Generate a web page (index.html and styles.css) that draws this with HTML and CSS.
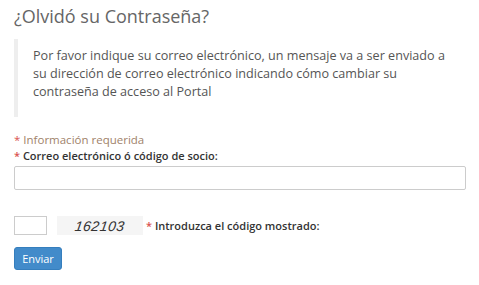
FILE: index.html
```html
<!DOCTYPE html>
<html lang="es">
<head>
<meta charset="utf-8">
<title>¿Olvidó su Contraseña?</title>
<link rel="stylesheet" href="styles.css">
</head>
<body>
<div class="page">
  <h1 class="title">¿Olvidó su Contraseña?</h1>
  <blockquote class="note">
    <p>Por favor indique su correo electrónico, un mensaje va a ser enviado a su dirección de correo electrónico indicando cómo cambiar su contraseña de acceso al Portal</p>
  </blockquote>
  <form class="form">
    <p class="req"><span class="star">*</span> Información requerida</p>
    <label class="lbl" for="email"><span class="star">*</span> Correo electrónico ó código de socio:</label>
    <input class="field" id="email" type="text">
    <div class="captcha-row">
      <input class="code" type="text">
      <div class="captcha"><span class="digits">162103</span></div>
      <label class="lbl inline"><span class="star">*</span> Introduzca el código mostrado:</label>
    </div>
    <button class="btn" type="button">Enviar</button>
  </form>
</div>
</body>
</html>
```
FILE: styles.css
```css
html, body {
  margin: 0;
  padding: 0;
  background: #fff;
}
.page {
  padding: 0 13px 0 14px;
  font-family: "Open Sans", "DejaVu Sans", sans-serif;
  color: #555;
}
.title {
  margin: 0;
  padding-top: 3px;
  font-size: 18px;
  font-weight: 400;
  line-height: 26px;
  color: #666;
}
.note {
  margin: 10px 0 0 0;
  padding: 8px 14px 16px 15px;
  border-left: 4px solid #eee;
}
.note p {
  margin: 0;
  font-size: 12.6px;
  line-height: 18px;
  color: #555;
}
.form {
  margin-top: 15px;
}
.req {
  margin: 0;
  font-size: 11.5px;
  line-height: 16px;
  color: #a0826a;
}
.star {
  color: #d9534f;
}
.lbl {
  display: block;
  font-size: 11px;
  line-height: 16px;
  font-weight: 600;
  color: #333;
}
.field {
  display: block;
  box-sizing: border-box;
  width: 100%;
  height: 24px;
  margin: 2px 0 0 0;
  border: 1px solid #ccc;
  border-radius: 2px;
  background: #fff;
}
.captcha-row {
  display: flex;
  align-items: center;
  margin-top: 26px;
}
.code {
  box-sizing: border-box;
  width: 33px;
  height: 19px;
  margin: 0;
  border: 1px solid #ccc;
  background: #fff;
}
.captcha {
  width: 86px;
  height: 19px;
  margin-left: 10px;
  background: #f5f5f5;
  display: flex;
  align-items: center;
  justify-content: center;
}
.digits {
  font-family: "Liberation Sans", Arial, sans-serif;
  font-style: italic;
  font-size: 14px;
  color: #333;
  letter-spacing: 0.5px;
  transform: skewX(-8deg);
}
.lbl.inline {
  margin-left: 3px;
}
.btn {
  display: block;
  margin-top: 12px;
  width: 48px;
  height: 23px;
  padding: 0;
  border: 1px solid #357ebd;
  border-radius: 3px;
  background: #428bca;
  color: #fff;
  font-family: "Open Sans", sans-serif;
  font-size: 11px;
}
```
